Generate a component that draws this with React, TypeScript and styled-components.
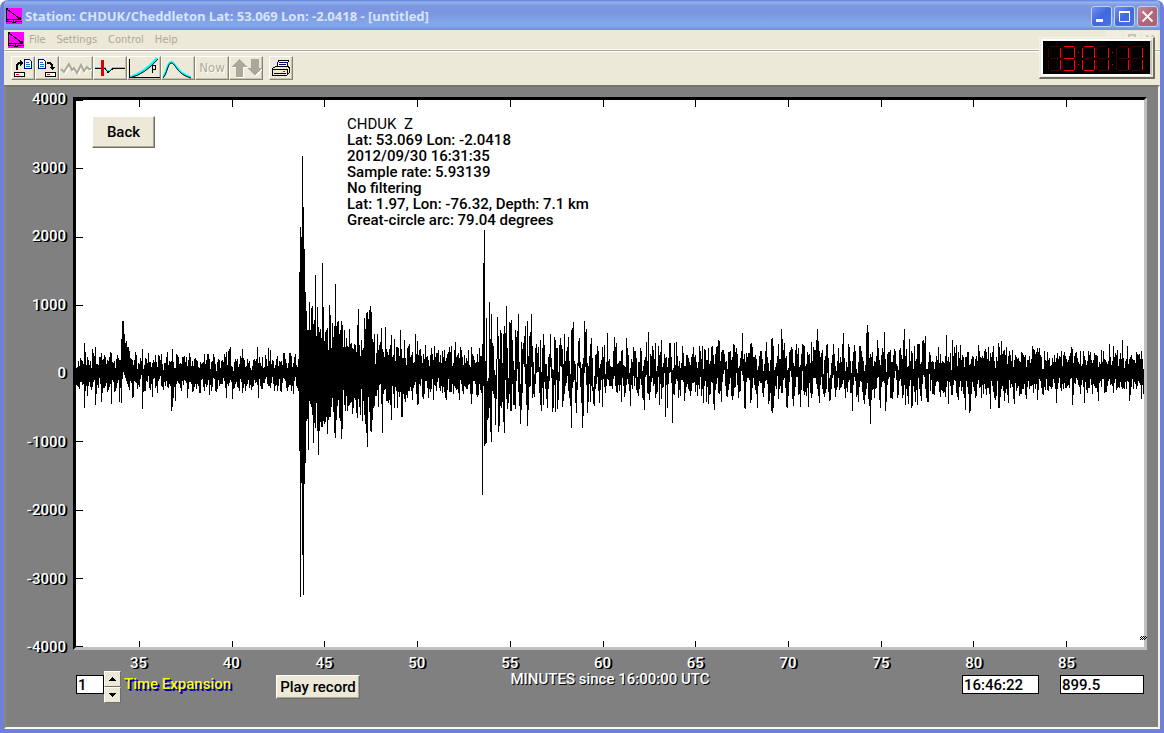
import React from "react";
import styled, { createGlobalStyle } from "styled-components";

const SYSTEM = `Roboto, "Liberation Sans", Arial, sans-serif`;
const FACE = "#ece9d8";

const GlobalStyle = createGlobalStyle`
  * { box-sizing: border-box; }
  body { margin: 0; background: #fff; font-family: ${SYSTEM}; }
  button, input { font: inherit; color: inherit; margin: 0; padding: 0; border-radius: 0; }
  svg { display: block; }
`;

/* ---------- window chrome ---------- */

const Window = styled.main`
  position: relative;
  display: flex;
  flex-direction: column;
  min-height: 100vh;
  background: ${FACE};
  border: solid #6f80d8;
  border-width: 0 4px 4px;
  border-radius: 8px 8px 0 0;
  overflow: hidden;
`;

const TitleBar = styled.header`
  display: flex;
  align-items: center;
  height: 30px;
  margin: 0 -4px;
  padding: 4px 6px 2px;
  flex: none;
  background: linear-gradient(
    #6c8be2 0, #6c8be2 1px, #9db8ef 2px, #8fabea 3px, #7c97e0 6px,
    #7b96e0 14px, #82a5e8 22px, #82a8ea 26px, #7b98e0 28px, #7590dc 30px
  );
`;

const Title = styled.h1`
  flex: 1;
  margin: 0 0 0 3px;
  font: bold 13px/18px "Open Sans", "Noto Sans", sans-serif;
  color: #d8e4f8;
  white-space: pre;
`;

const CaptionButtons = styled.div`
  display: flex;
  gap: 2px;
`;

const CaptionButton = styled.button<{ $close?: boolean }>`
  display: grid;
  place-items: center;
  width: 21px;
  height: 21px;
  border: 1px solid #c3d1f3;
  border-radius: 3px;
  background: ${(p) =>
    p.$close
      ? "linear-gradient(135deg, #c08a9c, #b0667a 50%, #a86478)"
      : "linear-gradient(135deg, #6f92ee, #4068dc 50%, #4a76e4)"};
`;

const MenuBar = styled.nav`
  display: flex;
  align-items: center;
  gap: 11px;
  height: 19px;
  padding-left: 4px;
  flex: none;
  font: 11px/14px "DejaVu Sans Condensed", "Noto Sans", sans-serif;
  color: #aca899;
`;

const MenuItem = styled.button`
  border: 0;
  background: none;
`;

const MenuIcon = styled.div`
  margin-right: -6px;
`;

const MdiButtons = styled.div`
  display: flex;
  align-self: flex-start;
  gap: 2px;
  margin-left: auto;
  padding: 1px 2px 0 0;
`;

const MdiButton = styled.button`
  display: grid;
  place-items: center;
  width: 16px;
  height: 16px;
  border: 0;
  background: #f0eee0;
`;

const Rule = styled.hr`
  flex: none;
  width: 100%;
  height: 3px;
  margin: 0;
  border: solid #fff;
  border-width: 1px 0;
  background: #aca899;
`;

const ToolBar = styled.div`
  display: flex;
  height: 33px;
  padding: 4px 7px;
  flex: none;
`;

const Tool = styled.button<{ $wide?: boolean; $apart?: boolean }>`
  display: grid;
  place-items: center;
  width: ${(p) => (p.$wide ? 34 : 24)}px;
  height: 24px;
  margin-left: ${(p) => (p.$apart ? 6 : 0)}px;
  border: 1px solid;
  border-color: #fff #848274 #848274 #fff;
  background: ${FACE};
  box-shadow: inset -1px -1px 0 #c8c4b0;
  overflow: hidden;
`;

const NowText = styled.span`
  font: 13px/16px "DejaVu Sans Condensed", "Noto Sans", sans-serif;
  color: #aca899;
  text-shadow: 1px 1px 0 #fff;
`;

const ClockFrame = styled.div`
  position: absolute;
  top: 37px;
  right: 5px;
  padding: 1px;
  border: 1px solid;
  border-color: #f4f2e8 #6f6d60 #6f6d60 #f4f2e8;
  border-width: 1px 2px 2px 1px;
  background: ${FACE};
`;

const ClockFace = styled.div`
  border: 2px solid;
  border-color: #fff #c8c5b4 #fff #fff;
  background: #000;
`;

/* ---------- client area ---------- */

const Client = styled.section`
  display: flex;
  flex-direction: column;
  flex: 1;
  padding: 10px 11px 24px 2px;
  border: solid;
  border-width: 2px 2px 2px 2px;
  border-color: #77756a #f4f2e8 #f8f7f0 #8b897c;
  background: #808080;
  color: #fff;
  font-size: 15px;
  font-weight: 500;
  line-height: 16px;
`;

const ChartRow = styled.div`
  display: flex;
  flex: 1;
  min-height: 240px;
`;

const YLabels = styled.ol`
  display: flex;
  flex-direction: column;
  justify-content: space-between;
  width: 58px;
  margin: -6px 7px -5px 0;
  padding: 0;
  list-style: none;
  text-align: right;
  text-shadow: 1px 1px 0 #000, 2px 1px 0 #000;
`;

const Plot = styled.div`
  position: relative;
  flex: 1;
  border: 3px solid;
  border-color: #000 #c0c0c0 #c0c0c0 #000;
  background: #fff;
  color: #000;
`;

const Trace = styled.svg`
  position: absolute;
  inset: 0;
  width: 100%;
  height: 100%;
`;

const Grip = styled.svg`
  position: absolute;
  right: -3px;
  bottom: 7px;
`;

const PlotHead = styled.div`
  position: relative;
  display: flex;
  align-items: flex-start;
  padding: 16px;
`;

const Info = styled.p`
  margin: 0 0 0 192px;
  white-space: pre;
`;

const Channel = styled.span`
  font-weight: 400;
`;

const PushButton = styled.button<{ $tall?: boolean }>`
  width: ${(p) => (p.$tall ? 63 : 84)}px;
  height: ${(p) => (p.$tall ? 32 : 24)}px;
  border: 1px solid;
  border-color: #fff #716f64 #716f64 #fff;
  background: ${FACE};
  box-shadow: inset -1px -1px 0 #aca899;
  color: #000;
  white-space: nowrap;
`;

const XLabels = styled.ol`
  display: grid;
  grid-template-columns: repeat(11, 1fr);
  margin: 5px 34px 0 84px;
  padding: 0;
  list-style: none;
  text-align: center;
  text-shadow: 1px 1px 0 #000, 2px 1px 0 #000;
`;

const Controls = styled.div`
  display: grid;
  grid-template-columns: 1fr auto 1fr;
  align-items: start;
  margin: 0 3px 0 68px;
`;

const Group = styled.div<{ $end?: boolean }>`
  display: flex;
  justify-content: ${(p) => (p.$end ? "flex-end" : "flex-start")};
  gap: ${(p) => (p.$end ? 21 : 0)}px;
  padding-top: ${(p) => (p.$end ? 4 : 0)}px;
`;

const AxisTitle = styled.div`
  text-shadow: 1px 1px 0 #000;
`;

const Field = styled.input<{ $w: number }>`
  width: ${(p) => p.$w}px;
  height: 19px;
  padding-left: 1px;
  border: 1px solid #000;
  background: #fff;
  color: #000;
`;

const Spinner = styled.div`
  display: flex;
  align-items: flex-start;
  ${Field} { margin-top: 4px; }
`;

const SpinButtons = styled.div`
  display: flex;
  flex-direction: column;
`;

const SpinButton = styled.button`
  display: grid;
  place-items: center;
  width: 17px;
  height: 16px;
  border: 1px solid;
  border-color: #fff #716f64 #716f64 #fff;
  background: ${FACE};
`;

const ExpansionLabel = styled.label`
  width: 152px;
  margin: 5px 0 0 3px;
  color: #ff0;
  text-shadow: 1px 1px 0 #00a, 2px 2px 0 #00a;
  white-space: nowrap;
`;

const PlaySlot = styled.div`
  padding-top: 4px;
`;

/* ---------- seismogram ---------- */

const X0 = 76;
const X1 = 1144;
const Y0 = 100;
const Y1 = 647;
const ZERO = 373;

/* Background of the trace: [from x, swing of the slow wave, half height of a stroke] */
const BANDS: [number, number, number][] = [
  [76, 5, 15],
  [306, 2, 52],
  [340, 2, 42],
  [374, 7, 26],
  [410, 5, 21],
  [486, 36, 26],
  [532, 24, 20],
  [600, 13, 18],
  [700, 15, 19],
  [930, 7, 20],
  [1040, 5, 17],
];

/* Crests and troughs, as x:y pairs */
const CRESTS = `84:343 85:352 92:349 95:347 101:353 110:352 121:339 122:321 123:321 124:334
125:343 126:341 127:347 128:347 129:351 130:358 142:349 158:355 167:352 172:349 176:354 184:356 189:353 204:354 226:352
228:351 229:349 230:347 242:349 257:347 268:348 270:350 283:353 289:353 299:272 300:227 301:237 302:156
303:207 304:249 305:292 306:311 307:330 308:330 309:302 310:330 311:308 312:306 313:324 314:320 315:275
316:336 317:307 318:327 319:332 320:329 321:338 322:263 323:307 324:341 325:332 326:330 327:328 328:350
329:305 330:315 331:348 332:323 333:337 334:326 335:284 336:326 337:322 338:321 339:334 340:330 341:321
342:325 343:347 344:330 345:347 346:338 347:346 348:347 349:329 350:344 351:343 352:348 353:349 354:344
355:345 356:352 357:325 358:309 359:345 360:356 361:340 362:350 363:348 364:318 365:329 366:313 367:312
368:319 369:310 370:306 371:312 372:339 373:342 374:334 375:364 377:334 379:345 381:328 385:327 391:335
394:339 400:330 404:340 408:346 415:334 417:341 425:345 431:348 434:346 451:346 455:342 471:347 482:344
483:263 484:230 486:318 489:302 491:314 492:343 497:317 498:336 500:330 501:333 503:334 505:333 506:306
507:348 509:322 510:323 515:330 517:331 518:314 521:342 523:343 525:326 527:321 531:314 532:346 535:348 540:340
550:334 554:337 557:348 564:334 568:337 571:330 572:328 573:322 578:341 579:338 584:321 585:332 586:329 591:338
604:345 607:333 614:337 616:343 626:338 648:332 655:343 661:340 674:343 676:342 699:346 702:346
708:348 716:347 718:340 719:341 733:344 734:345 742:333 744:354 750:344 751:343 752:347 760:351 766:342
771:339 772:338 773:346 781:329 782:339 783:350 792:349 795:350 798:348 803:345 804:346 811:342 816:340
817:329 818:341 826:345 833:344 843:333 848:344 849:347 854:345 861:351 866:333 867:325 868:332 878:348 883:352
884:332 890:350 894:349 903:340 904:329 909:339 914:346 918:344 919:344 924:343 925:336 938:347 946:335 952:340
956:345 967:352 988:347 993:346 998:343 999:347 1001:341 1006:347 1009:351 1023:355 1032:346 1033:349 1037:348 1044:351
1061:351 1071:347 1072:349 1080:351 1088:351 1109:344 1113:346 1117:350 1122:340 1127:346 1136:352 1141:351`;

const TROUGHS = `84:408 87:396 95:405 101:402 111:404 119:402 121:403 132:398 133:397 142:409
152:397 171:411 172:407 173:398 175:401 187:398 209:395 226:398 232:399 242:393 258:398 277:391
291:391 298:391 299:451 300:597 301:483 302:555 303:595 304:484 305:463 306:421 307:419 308:450 309:401
310:404 311:407 312:415 313:443 314:423 315:428 316:403 317:431 318:455 319:431 320:422 321:427 322:427 323:421
324:424 325:422 326:417 327:434 328:420 329:417 330:417 331:407 332:398 333:412 334:433 335:438 336:420 337:406
338:400 340:421 341:439 342:429 343:390 344:405 345:411 346:396 347:411 348:406 349:405 350:403 351:402 352:414
353:408 354:398 355:400 356:413 357:418 358:399 359:407 360:415 361:389 362:421 363:401 364:415 365:424 366:433
367:447 368:397 369:412 370:431 371:432 372:420 373:408 378:407 382:433 390:405 391:420 394:408 397:408 401:417
402:417 412:400 417:405 418:404 433:400 446:400 459:400 471:404 482:495 484:446 485:444 486:443 488:418
490:432 491:442 498:432 499:426 503:422 504:433 510:411 511:411 514:405 520:424 521:410 541:411 543:405 555:412 562:407
571:428 582:428 583:416 587:413 590:402 602:407 621:402 644:410 659:405 665:417 667:408 672:423 706:402
713:404 714:410 721:402 738:398 744:408 745:409 771:411 772:413 773:408 778:399 786:407 787:408
793:406 800:407 808:407 819:403 830:400 852:411 858:402 864:404 869:406 870:424 871:400 880:408 885:411 892:399
905:405 911:408 912:406 917:405 928:402 948:404 958:400 965:410 969:413 970:411 990:409 998:408 999:408 1004:401
1008:403 1014:404 1026:399 1056:403 1072:405 1084:403 1098:401 1129:401 1141:399`;

const pairs = (text: string) =>
  new Map(text.split(/\s+/).map((p) => p.split(":").map(Number) as [number, number]));

function tracePath() {
  const crests = pairs(CRESTS);
  const troughs = pairs(TROUGHS);
  let seed = 20120930;
  const random = () => {
    seed = (seed * 1664525 + 1013904223) % 4294967296;
    return seed / 4294967296;
  };
  let phase = 0;
  let above = ZERO;
  let below = ZERO;
  let d = "";
  for (let x = X0; x < X1; x++) {
    const [, swing, half] = [...BANDS].reverse().find((b) => x >= b[0])!;
    phase += 0.6 + random() * 0.9;
    const mid = ZERO + Math.sin(phase) * swing * (0.3 + random() * 0.7);
    let top = crests.get(x) ?? mid - half * (0.4 + random() * 0.75);
    let bottom = troughs.get(x) ?? mid + half * (0.4 + random() * 0.75);
    top = Math.min(top, below);
    bottom = Math.max(bottom, above, top + 2);
    if (x > 122 && x < 130) bottom = ZERO - 4 + (x - 122) * 3;
    above = Math.max(top, ZERO - 40);
    below = Math.min(bottom, ZERO + 40);
    d += `M${x} ${Math.round(top)}h1V${Math.round(bottom)}h-1z`;
  }
  return d;
}

const TRACE = tracePath();

const MINUTES = [35, 40, 45, 50, 55, 60, 65, 70, 75, 80, 85];
const COUNTS = [4000, 3000, 2000, 1000, 0, -1000, -2000, -3000, -4000];
const TICKS =
  MINUTES.map((_, i) => {
    const x = Math.round(139 + i * 92.7);
    return `M${x} ${Y0}h1v7h-1zM${x} ${Y1}h1v-6h-1z`;
  }).join("") +
  COUNTS.map((_, i) => `M${X0} ${Math.round(Y0 + i * 68.25)}h7v1h-7z`).join("");

/* ---------- drawings ---------- */

const SeismoIcon = () => (
  <svg width="16" height="16" viewBox="0 0 16 16" shapeRendering="crispEdges" aria-hidden="true">
    <path fill="#f0f" d="M0 0h16v16H0z" />
    <path fill="none" stroke="#000" d="M.5 0v13M1 1l13 10M1 11.500h14M6 14.500h4M7.500 12v2" />
    <path fill="#000" d="M0 0h2v2H0zM12 9h3v3h-3zM0 13h6v1H0zM9 13h7v1H9z" />
  </svg>
);

/* Segments in the order a to g */
const SEGMENTS = ["M1 0H11", "M12 1V11", "M12 13V23", "M1 24H11", "M0 13V23", "M0 1V11", "M1 12H11"];
const LIT: Record<string, string> = { "0": "012345", "1": "12", "3": "01236" };

const Digit = ({ x, value }: { x: number; value: string }) => (
  <g transform={`translate(${x} 5)`}>
    {SEGMENTS.map((d, i) => (
      <path key={i} d={d} stroke={LIT[value].includes(String(i)) ? "#f00" : "#400000"} />
    ))}
  </g>
);

const Clock = () => (
  <svg width="107" height="33" viewBox="-.5 -.5 107 33" fill="none" shapeRendering="crispEdges" role="img" aria-label="13:01:11">
    <Digit x={5} value="1" />
    <Digit x={19} value="3" />
    <Digit x={39} value="0" />
    <Digit x={53} value="1" />
    <Digit x={73} value="1" />
    <Digit x={87} value="1" />
    <path stroke="#f00" d="M35 10v1M35 22v1M69 10v1M69 22v1" />
  </svg>
);

const Page = ({ x }: { x: number }) => (
  <g transform={`translate(${x} 1)`}>
    <path fill="#fff" stroke="#000080" d="M.5.5h5l2 2v7h-7z" />
    <path stroke="#0080c0" d="M2 3.500h3M2 5.500h4M2 7.500h4" />
  </g>
);

const Drive = ({ x }: { x: number }) => (
  <g transform={`translate(${x} 14)`}>
    <path fill="#fff" stroke="#000" d="M.5.5h10v4H.5z" />
    <path stroke="#f00" d="M2 2.500h3" />
  </g>
);

const OpenIcon = () => (
  <svg width="20" height="20" fill="none" shapeRendering="crispEdges" aria-hidden="true">
    <Page x={11} />
    <Drive x={1} />
    <path stroke="#000" strokeWidth="2" d="M4 12V7l2-2h2" />
    <path fill="#000" d="M7 2l3 3-3 3z" />
  </svg>
);

const SaveIcon = () => (
  <svg width="20" height="20" fill="none" shapeRendering="crispEdges" aria-hidden="true">
    <Page x={1} />
    <Drive x={8} />
    <path stroke="#000" strokeWidth="2" d="M10 5h3l2 2v3" />
    <path fill="#000" d="M12 9h6l-3 3z" />
  </svg>
);

const WaveIcon = () => (
  <svg width="32" height="22" fill="none" strokeWidth="2" aria-hidden="true">
    <path stroke="#fff" d="M2 13l3 3 5-8 3 6 2-2 3 5 4-8 3 6 3-4 2 2h2" />
    <path stroke="#aca899" d="M1 12l3 3 5-8 3 6 2-2 3 5 4-8 3 6 3-4 2 2h2" />
  </svg>
);

const FilterIcon = () => (
  <svg width="32" height="22" fill="none" shapeRendering="crispEdges" aria-hidden="true">
    <path stroke="#0ff" d="M1 10.500h10l3 4 5-4h12" />
    <path stroke="#000" d="M1 11.500h10l3 4 5-4h12" />
    <path fill="#e00000" d="M7 3h3v16H7z" />
  </svg>
);

const CurveIcon = () => (
  <svg width="32" height="22" fill="none" aria-hidden="true">
    <path stroke="#0ff" strokeWidth="2" d="M2 20Q16 16 29 1" />
    <path stroke="#000" d="M3 20.500Q17 17 30 2" />
    <path stroke="#000" shapeRendering="crispEdges" d="M1.500 2v18.500h30M24.500 16V8.500h3v4h-3" />
  </svg>
);

const PeakIcon = () => (
  <svg width="32" height="22" fill="none" aria-hidden="true">
    <path stroke="#0ff" strokeWidth="2" d="M1 20C5 16 5 5 9 5c5 0 5 11 20 15" />
    <path stroke="#000" d="M1 21C5 17 6 6 9 6c5 0 5 11 20 15" />
  </svg>
);

const ArrowsIcon = () => (
  <svg width="32" height="22" shapeRendering="crispEdges" aria-hidden="true">
    <path fill="#fff" d="M10 3l8 8h-4v10H7V11H3zM22 3h7v9h4l-7 8-7-8h3z" />
    <path fill="#aca899" d="M9 2l8 8h-4v10H6V10H1zM21 2h8v9h3l-7 8-7-8h3z" />
  </svg>
);

const PrinterIcon = () => (
  <svg width="20" height="18" fill="none" shapeRendering="crispEdges" aria-hidden="true">
    <path fill="#fff" stroke="#000" d="M5.500 8.500l2-7h10l-2 7z" />
    <path stroke="#000080" d="M8 3.500h8M8 5.500h7" />
    <path fill="#ece9d8" stroke="#000" d="M1.500 9.500l3-2h13l1 2v4l-3 3h-14z" />
    <path stroke="#000" d="M1 10.500h15v5M3 14.500h12" />
    <path stroke="#f00" d="M12 12.500h2" />
  </svg>
);

const Triangle = ({ down }: { down?: boolean }) => (
  <svg width="7" height="4" shapeRendering="crispEdges" aria-hidden="true">
    <path d={down ? "M0 0h7L4 4H3z" : "M0 4h7L4 0H3z"} />
  </svg>
);

export default function App() {
  return (
    <Window>
      <GlobalStyle />
      <TitleBar>
        <SeismoIcon />
        <Title>Station: CHDUK/Cheddleton Lat: 53.069 Lon: -2.0418 - [untitled]</Title>
        <CaptionButtons>
          <CaptionButton aria-label="Minimize">
            <svg width="13" height="13"><path fill="#fff" d="M1 9h7v3H1z" /></svg>
          </CaptionButton>
          <CaptionButton aria-label="Maximize">
            <svg width="13" height="13" fill="none" stroke="#fff">
              <path d="M1.500 1.500h10v10h-10z" />
              <path strokeWidth="2" d="M1 2h11" />
            </svg>
          </CaptionButton>
          <CaptionButton $close aria-label="Close">
            <svg width="13" height="13" stroke="#f4f4f4" strokeWidth="2"><path d="M1.500 1.500l10 10M11.500 1.500l-10 10" /></svg>
          </CaptionButton>
        </CaptionButtons>
      </TitleBar>
      <MenuBar>
        <MenuIcon><SeismoIcon /></MenuIcon>
        <MenuItem>File</MenuItem>
        <MenuItem>Settings</MenuItem>
        <MenuItem>Control</MenuItem>
        <MenuItem>Help</MenuItem>
        <MdiButtons>
          <MdiButton aria-label="Minimize document" />
          <MdiButton aria-label="Restore document">
            <svg width="8" height="10"><path fill="none" stroke="#c8c5b4" strokeWidth="2" d="M1 9V1h6v6" /></svg>
          </MdiButton>
          <MdiButton aria-label="Close document">
            <svg width="8" height="8"><path stroke="#c8c5b4" strokeWidth="2" d="M0 0l8 8M8 0L0 8" /></svg>
          </MdiButton>
        </MdiButtons>
      </MenuBar>
      <Rule />
      <ToolBar>
        <Tool aria-label="Open record"><OpenIcon /></Tool>
        <Tool aria-label="Save record"><SaveIcon /></Tool>
        <Tool $wide aria-label="Waveform"><WaveIcon /></Tool>
        <Tool $wide aria-label="Pick arrival"><FilterIcon /></Tool>
        <Tool $wide aria-label="Travel times"><CurveIcon /></Tool>
        <Tool $wide aria-label="Spectrum"><PeakIcon /></Tool>
        <Tool $wide><NowText>Now</NowText></Tool>
        <Tool $wide aria-label="Scroll"><ArrowsIcon /></Tool>
        <Tool $apart aria-label="Print"><PrinterIcon /></Tool>
      </ToolBar>
      <Client>
        <ChartRow>
          <YLabels>
            {COUNTS.map((c) => <li key={c}>{c}</li>)}
          </YLabels>
          <Plot>
            <Trace viewBox="76 100 1068 547" preserveAspectRatio="none" shapeRendering="crispEdges" role="img" aria-label="Seismogram">
              <path d={TICKS} />
              <path d={TRACE} />
            </Trace>
            <PlotHead>
              <PushButton $tall>Back</PushButton>
              <Info>
                <Channel>{"CHDUK  Z\n"}</Channel>
                {`Lat: 53.069 Lon: -2.0418
2012/09/30 16:31:35
Sample rate: 5.93139
No filtering
Lat: 1.97, Lon: -76.32, Depth: 7.1 km
Great-circle arc: 79.04 degrees`}
              </Info>
            </PlotHead>
            <Grip width="7" height="4" shapeRendering="crispEdges" aria-hidden="true">
              <path stroke="#000" strokeDasharray="1 1" d="M1 .5h6M0 1.500h7M1 2.500h6M0 3.500h6" />
            </Grip>
          </Plot>
        </ChartRow>
        <XLabels>
          {MINUTES.map((m) => <li key={m}>{m}</li>)}
        </XLabels>
        <Controls>
          <Group>
            <Spinner>
              <Field $w={28} id="expansion" defaultValue="1" />
              <SpinButtons>
                <SpinButton aria-label="Increase"><Triangle /></SpinButton>
                <SpinButton aria-label="Decrease"><Triangle down /></SpinButton>
              </SpinButtons>
            </Spinner>
            <ExpansionLabel htmlFor="expansion">Time Expansion</ExpansionLabel>
            <PlaySlot><PushButton>Play record</PushButton></PlaySlot>
          </Group>
          <AxisTitle>MINUTES since 16:00:00 UTC</AxisTitle>
          <Group $end>
            <Field $w={77} aria-label="Time at cursor" defaultValue="16:46:22" />
            <Field $w={84} aria-label="Value at cursor" defaultValue="899.5" />
          </Group>
        </Controls>
      </Client>
      <ClockFrame>
        <ClockFace><Clock /></ClockFace>
      </ClockFrame>
    </Window>
  );
}
